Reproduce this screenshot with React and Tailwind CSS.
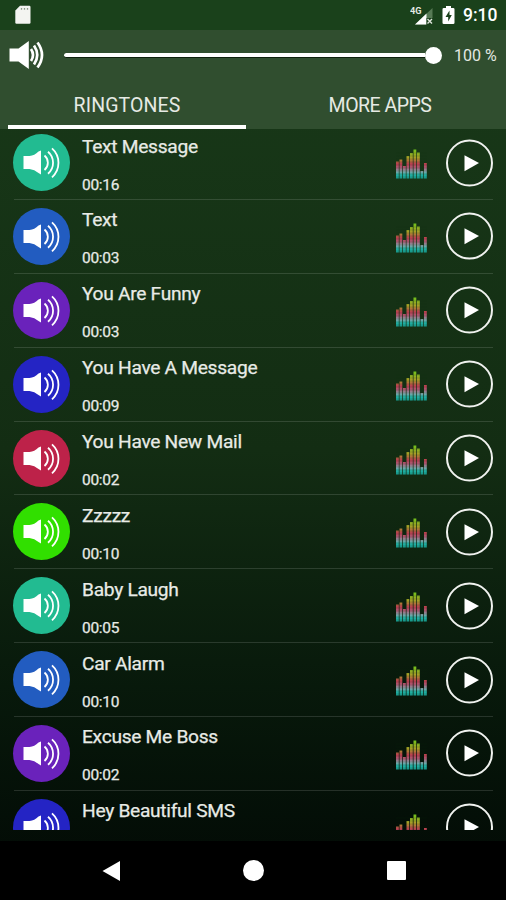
import React from 'react'

const ringtones = [
  { name: 'Text Message', time: '00:16', color: 'bg-[#22bb91]' },
  { name: 'Text', time: '00:03', color: 'bg-[#225cc0]' },
  { name: 'You Are Funny', time: '00:03', color: 'bg-[#6a22bb]' },
  { name: 'You Have A Message', time: '00:09', color: 'bg-[#2424c4]' },
  { name: 'You Have New Mail', time: '00:02', color: 'bg-[#bd2249]' },
  { name: 'Zzzzz', time: '00:10', color: 'bg-[#31df00]' },
  { name: 'Baby Laugh', time: '00:05', color: 'bg-[#22bb91]' },
  { name: 'Car Alarm', time: '00:10', color: 'bg-[#225cc0]' },
  { name: 'Excuse Me Boss', time: '00:02', color: 'bg-[#6a22bb]' },
  { name: 'Hey Beautiful SMS', color: 'bg-[#2424c4]' },
]

const bars = [12.5, 10.5, 17, 7, 4, 0.5, 3.5, 22, 14]

function SpeakerIcon() {
  return (
    <svg width="57" height="57" viewBox="0 0 57 57" fill="none">
      <path d="M10.500 22h6q5-.5 9-4.500l2.500-1v24l-2.500-1.500q-4-3.500-9-4h-6z" fill="#fff" />
      <g stroke="#fff" strokeWidth="1.8">
        <path d="M31.500 21.500a9.500 9.500 0 0 1 0 14.500" />
        <path d="M35 17.800a14.500 14.500 0 0 1 0 22" />
        <path d="M39 14.300a19.500 19.500 0 0 1 0 29" />
      </g>
    </svg>
  )
}

function VolumeIcon() {
  return (
    <svg width="36" height="30" viewBox="0 0 36 30" fill="none">
      <path d="M.5 8.500h9L19.800 1v28L9.500 21.500h-9z" fill="#fff" />
      <g stroke="#fff" strokeWidth="2.700">
        <path d="M22 9q4 6 0 12" />
        <path d="M25 5.500q6.500 9.500 0 19" />
        <path d="M28.500 2.500q9 12.500 0 25" />
      </g>
    </svg>
  )
}

function EqualizerIcon() {
  return (
    <svg className="mt-[3px]" width="31" height="30" viewBox="0 0 31 30">
      <defs>
        <linearGradient
          id="eq"
          gradientUnits="userSpaceOnUse"
          x1="0"
          y1="0"
          x2="0"
          y2="30"
        >
          <stop offset="0" stopColor="#6cc41a" />
          <stop offset="0.3" stopColor="#a89c28" />
          <stop offset="0.5" stopColor="#bb3c50" />
          <stop offset="0.62" stopColor="#ad5874" />
          <stop offset="0.76" stopColor="#7ca4aa" />
          <stop offset="0.86" stopColor="#20b0a4" />
          <stop offset="1" stopColor="#169a8e" />
        </linearGradient>
      </defs>
      {bars.map((top, i) => (
        <rect
          key={i}
          x={i * 3.5}
          y={top}
          width="2.8"
          height={29.5 - top}
          fill="url(#eq)"
        />
      ))}
      <path
        d="M0 4h31M0 7h31M0 10h31M0 13h31M0 16h31M0 19h31M0 22h31M0 25h31M0 28h31"
        stroke="#12300f"
        strokeWidth="0.5"
        opacity="0.3"
      />
    </svg>
  )
}

function PlayButton() {
  return (
    <button className="block">
      <svg width="48" height="48" viewBox="0 0 48 48">
        <circle cx="23.5" cy="24" r="22.5" fill="none" stroke="#f0f2ef" strokeWidth="2" />
        <path d="M18.500 16.200L33 24l-14.500 8.200z" fill="#fff" />
      </svg>
    </button>
  )
}

function StatusBar() {
  return (
    <div className="flex h-[30px] shrink-0 items-center justify-between bg-[#1a411b] pr-[8px] pl-[15px]">
      <svg width="16" height="20" viewBox="0 0 16 20">
        <path
          d="M5 0.800h9.300q1.200 0 1.200 1.200v15.500q0 1.200-1.200 1.200H1.500q-1.200 0-1.200-1.200V5.500z"
          fill="#f3f4f1"
        />
        <path d="M6.500 3v1.800M9.500 3v1.800M12.500 3v1.800" stroke="#8d9a89" strokeWidth="1.300" />
      </svg>
      <div className="flex items-center">
        <svg width="24" height="20" viewBox="0 0 24 20">
          <path d="M22.500 3v16.500H5z" fill="#577a55" />
          <path d="M16.500 8.500v11H5z" fill="#fff" />
          <rect x="16.500" y="13" width="7" height="7" fill="#1a411b" />
          <path d="M17.500 14l4.500 4.500M22 14l-4.500 4.500" stroke="#dfe6dd" strokeWidth="1.400" />
          <text
            x="0"
            y="9"
            fontSize="9.500"
            fontWeight="700"
            fontFamily="Roboto, sans-serif"
            textLength="11.500"
            lengthAdjust="spacingAndGlyphs"
            fill="#e4e9e2"
          >
            4G
          </text>
        </svg>
        <svg className="ml-[8px]" width="13" height="20" viewBox="0 0 13 20">
          <path
            d="M4 1h5v2h2.200q1.300 0 1.300 1.200v13.600q0 1.200-1.300 1.200H1.800Q.5 19 .5 17.800V4.200Q.5 3 1.800 3H4z"
            fill="#fff"
          />
          <path d="M7.500 5.500L3.500 12h2.700v4.500L9.800 10H7.500z" fill="#1a411b" />
        </svg>
        <span className="mt-px ml-[8px] w-[35px] text-[17.500px] font-medium whitespace-nowrap">
          9:10
        </span>
      </div>
    </div>
  )
}

function VolumeBar() {
  return (
    <div className="flex h-[50px] items-center pl-[9px]">
      <VolumeIcon />
      <div className="ml-[19px] flex w-[378px] items-center">
        <div className="h-[5px] grow rounded-l-full border-b border-[#0c1f0c] bg-white" />
        <div className="size-[17px] rounded-full bg-white" />
      </div>
      <span className="mt-px ml-[12px] text-[16px] whitespace-nowrap text-[#e3e8e2]">
        100 %
      </span>
    </div>
  )
}

function Tabs() {
  return (
    <div className="flex h-[48.500px] text-[19.500px] text-[#e6eae4]">
      <div className="ml-[8px] flex w-[238px] items-center justify-center border-b-[4.500px] border-white pt-[6px] tracking-[0.100px]">
        RINGTONES
      </div>
      <div className="ml-[8px] flex grow items-center justify-center pt-[2px] tracking-[-0.500px]">
        MORE APPS
      </div>
    </div>
  )
}

function RingtoneRow({ name, time, color }) {
  return (
    <div className="mr-[13px] ml-[14px] flex h-[73.850px] items-center border-b border-white/13 text-[#e8ebe6]">
      <div className={`-ml-px size-[57px] shrink-0 rounded-full ${color}`}>
        <SpeakerIcon />
      </div>
      <div className="ml-[12px] flex h-[60px] grow flex-col pt-[2px] [-webkit-text-stroke:0.25px_#e8ebe6]">
        <span className="text-[19.200px] leading-[24px] tracking-[-0.300px]">{name}</span>
        {time && (
          <span className="mt-[17px] text-[15.500px] leading-[18px] tracking-[-0.300px]">
            {time}
          </span>
        )}
      </div>
      <EqualizerIcon />
      <div className="-mr-[0.500px] ml-[19px]">
        <PlayButton />
      </div>
    </div>
  )
}

function NavBar() {
  return (
    <div className="flex h-[59px] shrink-0 items-center justify-between bg-black pr-[100px] pl-[102px]">
      <svg width="19" height="22" viewBox="0 0 19 22">
        <path d="M18 1v20L.5 11z" fill="#fff" />
      </svg>
      <div className="size-[21px] rounded-full bg-white" />
      <div className="size-[19.500px] rounded-[1px] bg-white" />
    </div>
  )
}

function App() {
  return (
    <div className="flex h-[900px] w-[506px] flex-col overflow-hidden bg-linear-to-b from-[#193a19] from-0% via-[#132d13] via-50% to-[#030c06] to-95% font-[Roboto,sans-serif] text-white">
      <StatusBar />
      <header className="h-[98.500px] shrink-0 bg-[#304e2f]">
        <VolumeBar />
        <Tabs />
      </header>
      <main className="h-[701px] shrink-0 overflow-hidden">
        <div className="-mt-[2.300px]">
          {ringtones.map((item) => (
            <RingtoneRow key={item.name} {...item} />
          ))}
        </div>
      </main>
      <div className="grow" />
      <NavBar />
    </div>
  )
}

export default App
